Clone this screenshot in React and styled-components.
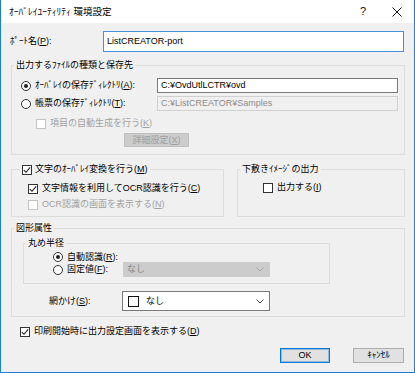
import React from 'react';
import styled, { createGlobalStyle } from 'styled-components';

const GlobalStyle = createGlobalStyle`
  html, body {
    margin: 0;
    padding: 0;
    background: #ffffff;
  }
  body {
    font-family: "Liberation Sans", "Noto Sans CJK JP", sans-serif;
    font-size: 9px;
    line-height: 13px;
    color: #000;
  }
  u {
    text-underline-offset: 1px;
  }
`;

const Window = styled.div`
  width: 415px;
  height: 373px;
  box-sizing: border-box;
  border: 1px solid #1a7fd4;
  border-top: none;
  display: flex;
  flex-direction: column;
  background: #f0f0f0;
`;

const TitleBar = styled.div`
  height: 23px;
  flex: none;
  background: #ffffff;
  display: flex;
  align-items: center;
  padding-left: 8px;
`;

const TitleText = styled.div`
  flex: 1;
  font-size: 9.5px;
  white-space: nowrap;
`;

const CaptionButton = styled.div`
  width: 34px;
  height: 23px;
  display: flex;
  align-items: center;
  justify-content: center;
  font-size: 11px;
  color: #111;
`;

const Body = styled.div`
  flex: 1;
  display: flex;
  flex-direction: column;
  padding: 8px 9px 0 10px;
`;

const PortRow = styled.div`
  display: flex;
  align-items: center;
  height: 21px;
`;

const FieldLabel = styled.div`
  width: ${(p) => p.$w}px;
  flex: none;
  white-space: nowrap;
  margin-left: ${(p) => p.$shift || 0}px;
`;

const fieldBorder = { focus: '#4a90d9', normal: '#7a7a7a', disabled: '#d0d0d0' };

const Field = styled.div`
  width: ${(p) => p.$w}px;
  height: ${(p) => p.$h}px;
  box-sizing: border-box;
  border: 1px solid ${(p) => fieldBorder[p.$state]};
  background: ${(p) => (p.$state === 'disabled' ? '#f0f0f0' : '#ffffff')};
  color: ${(p) => (p.$state === 'disabled' ? '#8c8c8c' : '#000')};
  display: flex;
  align-items: center;
  padding-left: 3px;
  white-space: nowrap;
  flex: none;
`;

const Group = styled.fieldset`
  margin: ${(p) => p.$mt || 0}px 0 0 0;
  padding: 0;
  border: 1px solid #dcdcdc;
  min-width: 0;
  width: ${(p) => (p.$w ? `${p.$w}px` : 'auto')};
  box-sizing: border-box;
`;

const Legend = styled.legend`
  padding: 0 2px;
  margin-left: ${(p) => p.$indent || 2}px;
  line-height: 13px;
  height: 13px;
  display: flex;
  align-items: center;
  gap: 3px;
  white-space: nowrap;
`;

const Text = styled.span`
  white-space: nowrap;
`;

const OutputGrid = styled.div`
  display: grid;
  grid-template-columns: 136px 241px;
  row-gap: 3px;
  align-items: center;
  padding: 6px 6px 7px 9px;
`;

const Option = styled.div`
  display: flex;
  align-items: center;
  gap: 4px;
  height: ${(p) => p.$h || 13}px;
  white-space: nowrap;
  color: ${(p) => (p.$disabled ? '#a0a0a0' : '#000')};
  margin-left: ${(p) => p.$ml || 0}px;
  margin-top: ${(p) => p.$mt || 0}px;
  grid-column: ${(p) => (p.$span ? '1 / -1' : 'auto')};
`;

const Box = styled.span`
  width: 10px;
  height: 10px;
  box-sizing: border-box;
  border: 1px solid ${(p) => (p.$disabled ? '#c4c4c4' : '#333333')};
  background: #ffffff;
  display: inline-flex;
  align-items: center;
  justify-content: center;
  flex: none;
`;

const Round = styled(Box)`
  border-radius: 50%;
  &::after {
    content: '';
    display: ${(p) => (p.$on ? 'block' : 'none')};
    width: 4px;
    height: 4px;
    border-radius: 50%;
    background: #222;
  }
`;

const PushButton = styled.div`
  width: ${(p) => p.$w}px;
  height: ${(p) => p.$h}px;
  box-sizing: border-box;
  display: flex;
  align-items: center;
  justify-content: center;
  white-space: nowrap;
  background: ${(p) => (p.$disabled ? '#cccccc' : '#e1e1e1')};
  border: 1px solid ${(p) => (p.$default ? '#0078d7' : p.$disabled ? '#bfbfbf' : '#adadad')};
  box-shadow: ${(p) => (p.$default ? 'inset 0 0 0 1px rgba(0,120,215,0.35)' : 'none')};
  color: ${(p) => (p.$disabled ? '#a0a0a0' : '#000')};
  grid-column: ${(p) => (p.$span ? '1 / -1' : 'auto')};
  margin-left: ${(p) => p.$ml || 0}px;
`;

const SplitRow = styled.div`
  display: grid;
  grid-template-columns: 213px 1fr;
  column-gap: 13px;
  margin-top: 8px;
`;

const GroupBody = styled.div`
  display: flex;
  flex-direction: column;
  gap: ${(p) => p.$gap || 0}px;
  padding: ${(p) => p.$pad};
`;

const RoundGrid = styled.div`
  display: grid;
  grid-template-columns: 70px 147px;
  grid-template-rows: 10px 15px;
  align-items: center;
  padding: 2px 0 6px 29px;
`;

const Combo = styled.div`
  width: ${(p) => p.$w}px;
  height: ${(p) => p.$h}px;
  box-sizing: border-box;
  border: 1px solid ${(p) => (p.$disabled ? '#cccccc' : '#7a7a7a')};
  background: ${(p) => (p.$disabled ? '#cccccc' : '#ffffff')};
  color: ${(p) => (p.$disabled ? '#838383' : '#000')};
  display: flex;
  align-items: center;
  padding: 0 5px 0 3px;
  flex: none;
`;

const ComboValue = styled.div`
  flex: 1;
  display: flex;
  align-items: center;
  gap: 7px;
`;

const Swatch = styled.span`
  width: 11px;
  height: 11px;
  box-sizing: border-box;
  border: 1px solid #111;
  background: #fff;
  margin-left: 2px;
`;

const NetRow = styled.div`
  display: flex;
  align-items: center;
  margin-top: 7px;
  padding-left: 26px;
`;

const Footer = styled.div`
  display: flex;
  justify-content: flex-end;
  gap: 23px;
  margin-top: 10px;
  margin-right: 1px;
`;

const Tick = () => (
  <svg width="8" height="8" viewBox="0 0 8 8">
    <path d="M0.8 4.2 L3 6.3 L7.2 1.4" stroke="#222" strokeWidth="1.1" fill="none" />
  </svg>
);

const Check = ({ on, disabled }) => <Box $disabled={disabled}>{on && <Tick />}</Box>;

const Chevron = ({ color }) => (
  <svg width="8" height="5" viewBox="0 0 8 5">
    <path d="M0.5 0.5 L4 4 L7.5 0.5" stroke={color} strokeWidth="1" fill="none" />
  </svg>
);

const Close = () => (
  <svg width="10" height="10" viewBox="0 0 10 10">
    <path d="M0.5 0.5 L9.5 9.5 M9.5 0.5 L0.5 9.5" stroke="#111" strokeWidth="1" />
  </svg>
);

export default function App() {
  return (
    <>
      <GlobalStyle />
      <Window>
        <TitleBar>
          <TitleText>ｵｰﾊﾞﾚｲﾕｰﾃｨﾘﾃｨ 環境設定</TitleText>
          <CaptionButton>?</CaptionButton>
          <CaptionButton><Close /></CaptionButton>
        </TitleBar>
        <Body>
          <PortRow>
            <FieldLabel $w={93} $shift={-1}>ﾎﾟｰﾄ名(<u>P</u>):</FieldLabel>
            <Field $w={301} $h={21} $state="focus">ListCREATOR-port</Field>
          </PortRow>

          <Group $mt={7}>
            <Legend>出力するﾌｧｲﾙの種類と保存先</Legend>
            <OutputGrid>
              <Option>
                <Round $on />
                <Text>ｵｰﾊﾞﾚｲの保存ﾃﾞｨﾚｸﾄﾘ(<u>A</u>):</Text>
              </Option>
              <Field $w={241} $h={15} $state="normal">C:¥OvdUtlLCTR¥ovd</Field>
              <Option>
                <Round />
                <Text>帳票の保存ﾃﾞｨﾚｸﾄﾘ(<u>T</u>):</Text>
              </Option>
              <Field $w={241} $h={15} $state="disabled">C:¥ListCREATOR¥Samples</Field>
              <Option $span $ml={15} $mt={3} $disabled>
                <Check disabled />
                <Text>項目の自動生成を行う(<u>K</u>)</Text>
              </Option>
              <PushButton $span $ml={103} $w={65} $h={14} $disabled>
                <Text>詳細設定(<u>X</u>)</Text>
              </PushButton>
            </OutputGrid>
          </Group>

          <SplitRow>
            <Group>
              <Legend $indent={8}>
                <Check on />
                <Text>文字のｵｰﾊﾞﾚｲ変換を行う(<u>M</u>)</Text>
              </Legend>
              <GroupBody $pad="6px 4px 5px 16px" $gap={3}>
                <Option>
                  <Check on />
                  <Text>文字情報を利用してOCR認識を行う(<u>C</u>)</Text>
                </Option>
                <Option $disabled>
                  <Check disabled />
                  <Text>OCR認識の画面を表示する(<u>N</u>)</Text>
                </Option>
              </GroupBody>
            </Group>
            <Group>
              <Legend>下敷きｲﾒｰｼﾞの出力</Legend>
              <GroupBody $pad="5px 4px 5px 25px">
                <Option>
                  <Check />
                  <Text>出力する(<u>I</u>)</Text>
                </Option>
              </GroupBody>
            </Group>
          </SplitRow>

          <Group $mt={5}>
            <Legend>図形属性</Legend>
            <GroupBody $pad="2px 0 5px 11px">
              <Group $w={307}>
                <Legend>丸め半径</Legend>
                <RoundGrid>
                  <Option $h={10}>
                    <Round $on />
                    <Text>自動認識(<u>R</u>):</Text>
                  </Option>
                  <span />
                  <Option>
                    <Round />
                    <Text>固定値(<u>F</u>):</Text>
                  </Option>
                  <Combo $w={147} $h={15} $disabled>
                    <ComboValue>なし</ComboValue>
                    <Chevron color="#a8a8a8" />
                  </Combo>
                </RoundGrid>
              </Group>
              <NetRow>
                <FieldLabel $w={73}>網かけ(<u>S</u>):</FieldLabel>
                <Combo $w={148} $h={20}>
                  <ComboValue>
                    <Swatch />
                    <Text>なし</Text>
                  </ComboValue>
                  <Chevron color="#444" />
                </Combo>
              </NetRow>
            </GroupBody>
          </Group>

          <Option $ml={9} $mt={8}>
            <Check on />
            <Text>印刷開始時に出力設定画面を表示する(<u>D</u>)</Text>
          </Option>

          <Footer>
            <PushButton $w={50} $h={15} $default>OK</PushButton>
            <PushButton $w={51} $h={15}>ｷｬﾝｾﾙ</PushButton>
          </Footer>
        </Body>
      </Window>
    </>
  );
}
